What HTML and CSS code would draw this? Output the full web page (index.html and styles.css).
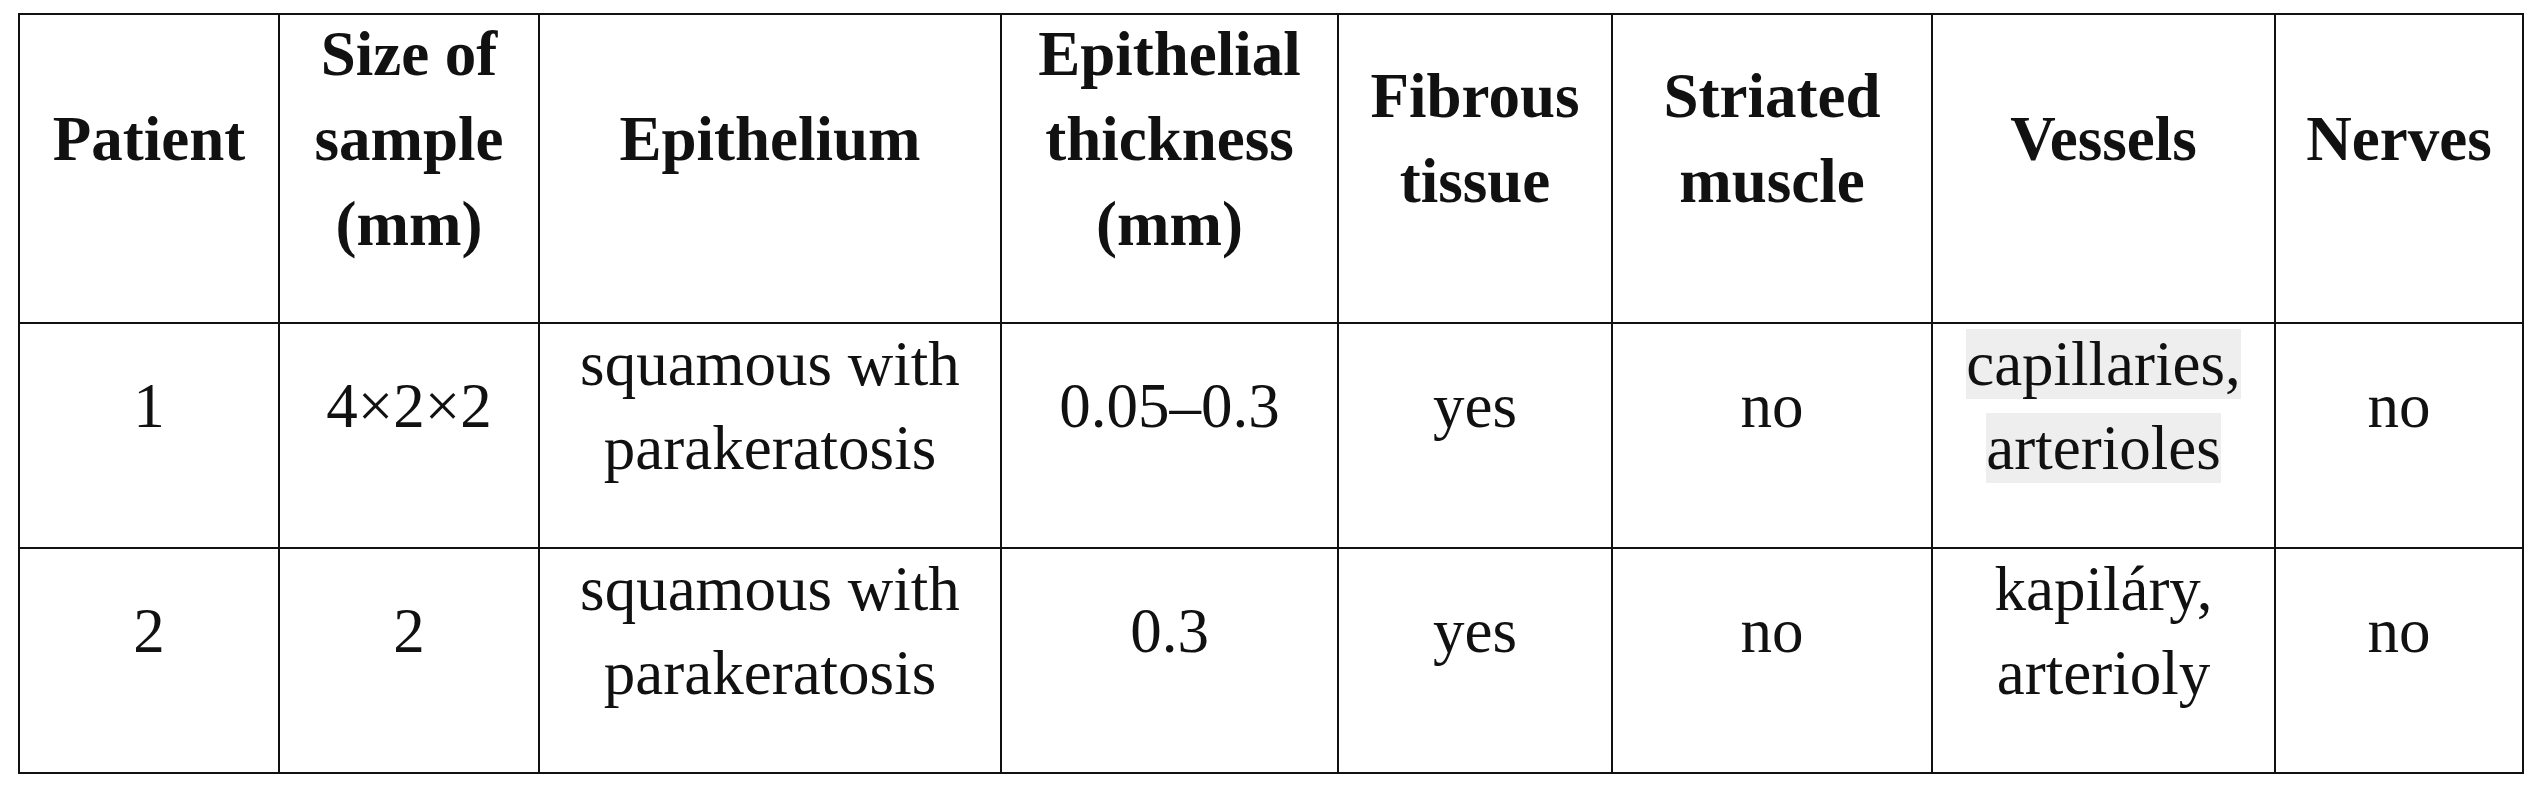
FILE: index.html
```html
<!DOCTYPE html>
<html lang="en">
<head>
<meta charset="utf-8">
<title>Histology table</title>
<link rel="stylesheet" href="styles.css">
</head>
<body>
<div class="page">
  <table class="data-table">
    <colgroup>
      <col class="c1"><col class="c2"><col class="c3"><col class="c4"><col class="c5"><col class="c6"><col class="c7"><col class="c8">
    </colgroup>
    <thead>
      <tr class="head-row">
        <th><div class="txt">Patient</div></th>
        <th><div class="txt">Size of<br>sample<br>(mm)</div></th>
        <th><div class="txt">Epithelium</div></th>
        <th><div class="txt">Epithelial<br>thickness<br>(mm)</div></th>
        <th><div class="txt">Fibrous<br>tissue</div></th>
        <th><div class="txt">Striated<br>muscle</div></th>
        <th><div class="txt">Vessels</div></th>
        <th><div class="txt">Nerves</div></th>
      </tr>
    </thead>
    <tbody>
      <tr class="body-row">
        <td><div class="txt">1</div></td>
        <td><div class="txt">4×2×2</div></td>
        <td><div class="txt">squamous with<br>parakeratosis</div></td>
        <td><div class="txt">0.05–0.3</div></td>
        <td><div class="txt">yes</div></td>
        <td><div class="txt">no</div></td>
        <td><div class="txt"><span class="hl">capillaries,</span><br><span class="hl">arterioles</span></div></td>
        <td><div class="txt">no</div></td>
      </tr>
      <tr class="body-row">
        <td><div class="txt">2</div></td>
        <td><div class="txt">2</div></td>
        <td><div class="txt">squamous with<br>parakeratosis</div></td>
        <td><div class="txt">0.3</div></td>
        <td><div class="txt">yes</div></td>
        <td><div class="txt">no</div></td>
        <td><div class="txt">kapiláry,<br>arterioly</div></td>
        <td><div class="txt">no</div></td>
      </tr>
    </tbody>
  </table>
</div>
</body>
</html>
```

FILE: styles.css
```css
html, body {
  margin: 0;
  padding: 0;
  background: #ffffff;
}

.page {
  padding: 13px 0 0 18px;
}

.data-table {
  border-collapse: separate;
  border-spacing: 0;
  table-layout: fixed;
  width: 2506px;
  border-top: 2px solid #111;
  border-left: 2px solid #111;
  font-family: "Liberation Serif", "Times New Roman", serif;
  color: #111;
}

.c1 { width: 260px; }
.c2 { width: 260px; }
.c3 { width: 462px; }
.c4 { width: 337px; }
.c5 { width: 274px; }
.c6 { width: 320px; }
.c7 { width: 343px; }
.c8 { width: 248px; }

.data-table th,
.data-table td {
  border-right: 2px solid #111;
  border-bottom: 2px solid #111;
  text-align: center;
  vertical-align: middle;
  padding: 0 4px 59px;
  white-space: nowrap;
}

.head-row { height: 309px; }
.body-row { height: 225px; }

.data-table th {
  font-weight: 700;
  font-size: 63px;
  line-height: 85px;
}

.data-table td {
  font-weight: 400;
  font-size: 63px;
  line-height: 84px;
}

.txt {
  margin: -4px 0;
}

.hl {
  background: #eeeeee;
}
```
